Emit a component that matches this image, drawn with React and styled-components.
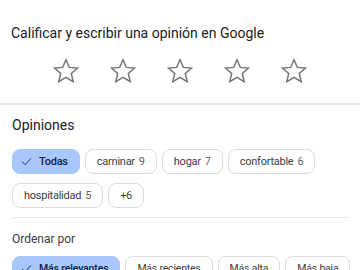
import React from "react";
import styled, { createGlobalStyle } from "styled-components";

const Global = createGlobalStyle`
  html, body { margin: 0; padding: 0; background: #fff; }
  body { font-family: Roboto, "Noto Sans", Arial, sans-serif; overflow: hidden; }
`;

const Page = styled.div`
  width: 360px;
  height: 270px;
  overflow: hidden;
  background: #fff;
`;

const RateSection = styled.section`
  padding: 24px 12px 0 11px;
  height: 79px;
  border-bottom: 2px solid #e8e8e8;
`;

const Title = styled.h2`
  margin: 0;
  font-size: 14px;
  font-weight: 400;
  line-height: 18px;
  color: #202124;
  letter-spacing: 0;
`;

const Stars = styled.div`
  display: flex;
  justify-content: center;
  gap: 31px;
  margin-top: 16px;
`;

const StarIcon = styled.svg`
  width: 26px;
  height: 26px;
  display: block;
`;

const Section = styled.section`
  padding: 0 11px 0 12px;
`;

const Heading = styled.h3`
  margin: 0;
  padding-top: 11px;
  font-size: 14px;
  font-weight: 400;
  line-height: 18px;
  color: #202124;
`;

const ChipWrap = styled.div`
  display: flex;
  flex-wrap: ${(p) => (p.$nowrap ? "nowrap" : "wrap")};
  gap: 9px 5px;
  margin-top: ${(p) => p.$top}px;
`;

const Chip = styled.button`
  display: inline-flex;
  align-items: center;
  flex-shrink: 0;
  gap: 7px;
  height: 25px;
  margin: 0;
  box-sizing: border-box;
  padding: ${(p) => (p.$active ? "0 11px 0 8px" : "0 11px")};
  border-radius: 8px;
  border: 1px solid ${(p) => (p.$active ? "#a8c7fa" : "#dadce0")};
  background: ${(p) => (p.$active ? "#a8c7fa" : "#fff")};
  color: ${(p) => (p.$active ? "#0b1f4a" : "#3c4043")};
  font-family: Roboto, "Noto Sans", Arial, sans-serif;
  font-size: ${(p) => p.$fs || 11}px;
  font-weight: ${(p) => (p.$active ? 500 : 400)};
  letter-spacing: ${(p) => p.$ls || "-0.25px"};
  white-space: nowrap;
`;

const Count = styled.span`
  color: #5f6368;
  margin-left: -3px;
`;

const Divider = styled.hr`
  margin: 9px 0 0;
  border: 0;
  border-top: 1px solid #e6e6e6;
`;

const SubHeading = styled.div`
  margin-top: 13px;
  font-size: 12px;
  line-height: 16px;
  color: #3c4043;
`;

const Check = () => (
  <svg width="11" height="11" viewBox="0 0 24 24" fill="none" stroke="#0b1f4a" strokeWidth="2" strokeLinecap="round" strokeLinejoin="round">
    <path d="M3 13l6 6L21 6" />
  </svg>
);

const Star = () => (
  <StarIcon viewBox="0 0 26 26">
    <path
      d="M13 1.8l3.3 7.6 8.2.7-6.2 5.4 1.9 8.1L13 19.3l-7.2 4.3 1.9-8.1-6.2-5.4 8.2-.7z"
      fill="none"
      stroke="#70757a"
      strokeWidth="1.5"
      strokeLinejoin="miter"
    />
  </StarIcon>
);

const topics = [
  ["caminar", 9],
  ["hogar", 7],
  ["confortable", 6],
  ["hospitalidad", 5],
];

const sorts = ["Más recientes", "Más alta", "Más baja"];

export default function App() {
  return (
    <Page>
      <Global />
      <RateSection>
        <Title>Calificar y escribir una opinión en Google</Title>
        <Stars>
          {[0, 1, 2, 3, 4].map((i) => (
            <Star key={i} />
          ))}
        </Stars>
      </RateSection>
      <Section>
        <Heading>Opiniones</Heading>
        <ChipWrap $top={15}>
          <Chip $active>
            <Check />
            Todas
          </Chip>
          {topics.map(([t, n]) => (
            <Chip key={t}>
              {t} <Count>{n}</Count>
            </Chip>
          ))}
          <Chip>+6</Chip>
        </ChipWrap>
        <Divider />
        <SubHeading>Ordenar por</SubHeading>
        <ChipWrap $top={9} $nowrap>
          <Chip $active $fs={10.5} $ls="-0.15px">
            <Check />
            Más relevantes
          </Chip>
          {sorts.map((s) => (
            <Chip key={s} $fs={10.5} $ls="-0.2px">{s}</Chip>
          ))}
        </ChipWrap>
      </Section>
    </Page>
  );
}
